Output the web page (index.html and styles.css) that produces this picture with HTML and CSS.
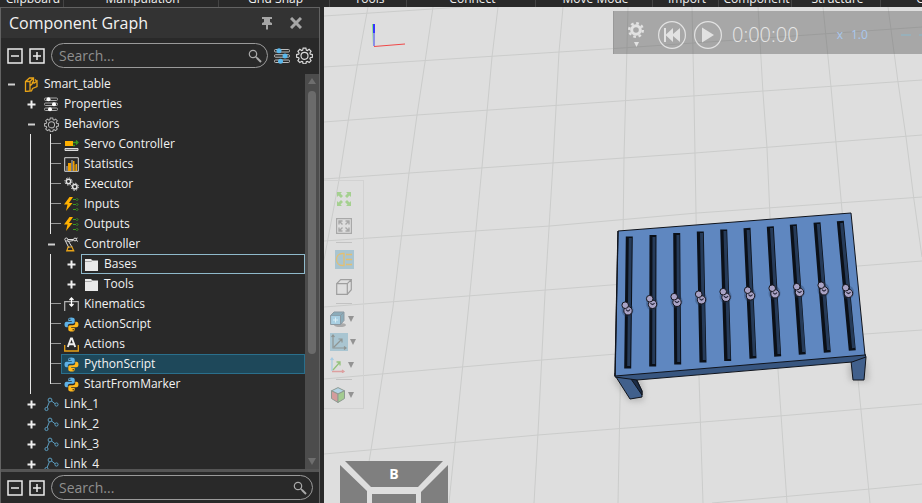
FILE: index.html
```html
<!DOCTYPE html>
<html lang="en">
<head>
<meta charset="utf-8">
<title>Component Graph</title>
<link rel="stylesheet" href="styles.css">
</head>
<body>
<svg class="defs" aria-hidden="true">
  <symbol id="minus" viewBox="0 0 9 9"><path d="M1 4.500h7" stroke="#d0d0d0" stroke-width="2"/></symbol>
  <symbol id="plus" viewBox="0 0 9 9"><path d="M.5 4.500h8M4.500 .5v8" stroke="#f0f0f0" stroke-width="2"/></symbol>
  <symbol id="boxminus" viewBox="0 0 16 16"><path d="M1 1h14v14H1z" fill="none" stroke="#ececec" stroke-width="1.500"/><path d="M4 8h8" stroke="#ececec" stroke-width="1.500"/></symbol>
  <symbol id="boxplus" viewBox="0 0 16 16"><path d="M1 1h14v14H1z" fill="none" stroke="#ececec" stroke-width="1.500"/><path d="M4 8h8M8 4v8" stroke="#ececec" stroke-width="1.500"/></symbol>
  <symbol id="lens" viewBox="0 0 14 14"><circle cx="5" cy="5" r="3.700" fill="none" stroke="#aaa" stroke-width="1.200"/><path d="M7.500 7.500l2 2" stroke="#aaa" stroke-width="1.200"/><path d="M9 9l4 4" stroke="#aaa" stroke-width="2"/></symbol>
  <symbol id="gear" viewBox="0 0 16 16"><path d="M6.700 1h2.600l.4 1.900 1 .4 1.700-1.100 1.800 1.800-1.100 1.700.4 1 1.900.4v2.600l-1.900.4-.4 1 1.100 1.700-1.800 1.800-1.700-1.100-1 .4-.4 1.900H6.700l-.4-1.900-1-.4-1.700 1.100-1.800-1.800 1.100-1.700-.4-1-1.900-.4V7.100l1.900-.4.4-1-1.100-1.700 1.800-1.800 1.700 1.100 1-.4z" fill="none" stroke="currentColor" stroke-width="1.100"/><circle cx="8" cy="8.300" r="3.300" fill="none" stroke="currentColor" stroke-width="1.100"/></symbol>
  <symbol id="part" viewBox="0 0 15 15"><path d="M1.500 4.500l4-3.500h4v3l-1 1.500 2 .5 2.500-2v5.500l-4.500 2-1 2.500-6 .5zM1.500 4.500h4.500l3.500-3.500M6 4.500v9M6 9l3-3M11 2.500l1.500 1.500" fill="none" stroke="#e8a317" stroke-width="1.300"/></symbol>
  <symbol id="props" viewBox="0 0 15 15"><g fill="none" stroke="#aaa"><rect x=".5" y="1" width="13" height="2.500" rx="1"/><rect x=".5" y="6" width="13" height="2.500" rx="1"/><rect x=".5" y="11" width="13" height="2.500" rx="1"/></g><g fill="#fff"><circle cx="4.500" cy="2.300" r="2"/><circle cx="10" cy="7.300" r="2"/><circle cx="6" cy="12.300" r="2"/></g></symbol>
  <symbol id="filter" viewBox="0 0 16 16"><g fill="none" stroke="#bdbdbd"><rect x=".5" y="1.500" width="15" height="2.500" rx="1"/><rect x=".5" y="6.700" width="15" height="2.500" rx="1"/><rect x=".5" y="12" width="15" height="2.500" rx="1"/></g><g fill="#5ab8ec"><circle cx="5" cy="2.800" r="2.500"/><circle cx="11" cy="8" r="2.500"/><circle cx="6.500" cy="13.200" r="2.500"/></g></symbol>
  <symbol id="servo" viewBox="0 0 15 15"><path d="M1 4h8v5H1z" fill="#ffb000"/><path d="M9 5.500h4M12 3.500l2 2-2 2M9 8.500h2" fill="none" stroke="#3a9b23" stroke-width="1.300"/><path d="M1 11.500h13v2H1z" fill="#777" stroke="#ddd"/></symbol>
  <symbol id="stats" viewBox="0 0 15 15"><path d="M.7.7h13.600v13.600H.7z" fill="none" stroke="#d8d8d8"/><path d="M2 9h2v5H2zM7 3h2v11H7zM10.500 8h1v6h-1z" fill="#777"/><path d="M4 6h3v8H4zM9 4h1.500v10H9zM11.500 7H13v7h-1.500z" fill="#f0a000"/></symbol>
  <symbol id="exec" viewBox="0 0 15 15"><g fill="none" stroke="#e2e2e2"><circle cx="4.500" cy="4.500" r="2.200" stroke-width="1.500"/><circle cx="4.500" cy="4.500" r="3.600" stroke-dasharray="1.400 1.420"/><circle cx="10.800" cy="9.800" r="2.200" stroke-width="1.500"/><circle cx="10.800" cy="9.800" r="3.600" stroke-dasharray="1.400 1.420"/></g></symbol>
  <symbol id="signal" viewBox="0 0 15 15"><path d="M5.500 0L0 7.500h3.500L2 14l6.500-8H5L9 0z" fill="#ffb000"/><path d="M9 2.500h3M9 7.500h3M9 12.500h3M12.500 1l1.500 1.500L12.500 4M12.500 6L14 7.500 12.500 9M12.500 11l1.500 1.500-1.500 1.500" fill="none" stroke="#3a9b23"/></symbol>
  <symbol id="robot" viewBox="0 0 15 15"><path d="M2 2.500h10M3.500 4.500l6-1M1.500 4l3.500 7M4 3.500L8 10M11 2l2.500-1M12 3l2 1.500" fill="none" stroke="#ddd"/><circle cx="2.300" cy="2.500" r="1.500" fill="#292929" stroke="#ddd"/><circle cx="11" cy="2.500" r="1.400" fill="#292929" stroke="#ddd"/><path d="M3 13.500l1-3.500h4l1.500 3.500zM2 14h8.500" fill="none" stroke="#e8a317" stroke-width="1.200"/></symbol>
  <symbol id="folder" viewBox="0 0 15 15"><path d="M1 2h6l1.500 1.500H14V14H1z" fill="#e9e9e9"/><path d="M1 4.500h6L8.500 3.500" fill="none" stroke="#aaa"/></symbol>
  <symbol id="kin" viewBox="0 0 15 15"><path d="M.7 14V4.700h13.600V14" fill="none" stroke="#b5b5b5" stroke-width="1.200"/><path d="M7.500 1v9M5.500 3l2-2 2 2M5.500 7l2 2 2-2" fill="none" stroke="#fff" stroke-width="1.300"/></symbol>
  <symbol id="python" viewBox="0 0 15 15"><path d="M7.200.5C5 .5 4.300 1.400 4.300 2.600V4h3.500v.8H2.500C1.200 4.800.5 6 .5 7.500s.7 2.800 2 2.800h1.300V8.700c0-1.200 1-2 2.200-2h3c1 0 1.700-.8 1.700-1.700V2.600C10.700 1.200 9.500.5 7.200.5z" fill="#5fb2e6"/><path d="M7.800 14.500c2.200 0 2.900-.9 2.900-2.100V11H7.200v-.8h5.300c1.300 0 2-1.200 2-2.700s-.7-2.800-2-2.800h-1.300v1.600c0 1.200-1 2-2.200 2H6c-1 0-1.700.8-1.700 1.700v2.400c0 1.400 1.200 2.100 3.500 2.100z" fill="#ffb81c"/><circle cx="5.800" cy="2.300" r=".7" fill="#222"/><circle cx="9.200" cy="12.700" r=".7" fill="#222"/></symbol>
  <symbol id="action" viewBox="0 0 15 15"><path d="M.7 8v6h13.600V8" fill="none" stroke="#e8a317" stroke-width="1.300"/><path d="M3.800 10L7 1.500h1L11.200 10M5 7.300h5" fill="none" stroke="#eee" stroke-width="1.900"/></symbol>
  <symbol id="link" viewBox="0 0 15 15"><path d="M2.500 12L6 3.300M7 3.500l5 4" fill="none" stroke="#5c9cbe"/><g fill="#292929" stroke="#5c9cbe"><circle cx="2.500" cy="12" r="1.600"/><circle cx="6" cy="3" r="1.900"/><circle cx="12.500" cy="7.500" r="1.600"/></g></symbol>
  <symbol id="caret" viewBox="0 0 6 6"><path d="M0 0h6L3 6z" fill="#939393"/></symbol>
</svg>

<div class="app">
  <nav class="ribbon" aria-label="Ribbon groups">
    <span>Clipboard</span><span>Manipulation</span><span>Grid Snap</span><span>Tools</span><span>Connect</span><span>Move Mode</span><span>Import</span><span>Component</span><span>Structure</span><span>Geometry</span>
  </nav>

  <div class="work">
    <aside class="panel">
      <header class="panel-head">
        <h1>Component Graph</h1>
        <button type="button" aria-label="Pin"><svg width="12" height="14" viewBox="0 0 12 14"><path d="M1 1h10v2H9v3l2 1v2H7v4.500H5V9H1V7l2-1V3H1z" fill="#a6a6a6"/></svg></button>
        <button type="button" aria-label="Close"><svg width="12" height="12" viewBox="0 0 12 12"><path d="M1 1l10 10M11 1L1 11" stroke="#a6a6a6" stroke-width="3"/></svg></button>
      </header>

      <div class="tools">
        <button type="button" aria-label="Collapse all"><svg width="16" height="16"><use href="#boxminus"/></svg></button>
        <button type="button" aria-label="Expand all"><svg width="16" height="16"><use href="#boxplus"/></svg></button>
        <label class="search"><input type="text" placeholder="Search..." aria-label="Search components"><svg width="14" height="14"><use href="#lens"/></svg></label>
        <button type="button" aria-label="Filter"><svg width="16" height="16"><use href="#filter"/></svg></button>
        <button type="button" aria-label="Settings"><svg width="17" height="17"><use href="#gear"/></svg></button>
      </div>

      <div class="tree-wrap">
        <ul class="tree">
          <li><button class="tg" type="button" aria-label="Collapse"><svg><use href="#minus"/></svg></button><span class="item"><svg><use href="#part"/></svg>Smart_table</span></li>
          <li><i></i><button class="tg" type="button" aria-label="Expand"><svg><use href="#plus"/></svg></button><span class="item"><svg><use href="#props"/></svg>Properties</span></li>
          <li><i></i><button class="tg" type="button" aria-label="Collapse"><svg><use href="#minus"/></svg></button><span class="item dim"><svg><use href="#gear"/></svg>Behaviors</span></li>
          <li><i></i><i class="v"></i><i class="v tick"></i><span class="item"><svg><use href="#servo"/></svg>Servo Controller</span></li>
          <li><i></i><i class="v"></i><i class="v tick"></i><span class="item"><svg><use href="#stats"/></svg>Statistics</span></li>
          <li><i></i><i class="v"></i><i class="v tick"></i><span class="item"><svg><use href="#exec"/></svg>Executor</span></li>
          <li><i></i><i class="v"></i><i class="v tick"></i><span class="item"><svg><use href="#signal"/></svg>Inputs</span></li>
          <li><i></i><i class="v"></i><i class="v tick"></i><span class="item"><svg><use href="#signal"/></svg>Outputs</span></li>
          <li><i></i><i class="v"></i><button class="tg" type="button" aria-label="Collapse"><svg><use href="#minus"/></svg></button><span class="item"><svg><use href="#robot"/></svg>Controller</span></li>
          <li><i></i><i class="v"></i><i class="v"></i><button class="tg" type="button" aria-label="Expand"><svg><use href="#plus"/></svg></button><span class="item hover"><svg><use href="#folder"/></svg>Bases</span></li>
          <li><i></i><i class="v"></i><i class="v"></i><button class="tg" type="button" aria-label="Expand"><svg><use href="#plus"/></svg></button><span class="item"><svg><use href="#folder"/></svg>Tools</span></li>
          <li><i></i><i class="v"></i><i class="v tick"></i><span class="item"><svg><use href="#kin"/></svg>Kinematics</span></li>
          <li><i></i><i class="v"></i><i class="v tick"></i><span class="item"><svg><use href="#python"/></svg>ActionScript</span></li>
          <li><i></i><i class="v"></i><i class="v tick"></i><span class="item"><svg><use href="#action"/></svg>Actions</span></li>
          <li><i></i><i class="v"></i><i class="v tick"></i><span class="item selected"><svg><use href="#python"/></svg>PythonScript</span></li>
          <li><i></i><i class="v"></i><i class="v tick last"></i><span class="item"><svg><use href="#python"/></svg>StartFromMarker</span></li>
          <li><i></i><button class="tg" type="button" aria-label="Expand"><svg><use href="#plus"/></svg></button><span class="item"><svg><use href="#link"/></svg>Link_1</span></li>
          <li><i></i><button class="tg" type="button" aria-label="Expand"><svg><use href="#plus"/></svg></button><span class="item"><svg><use href="#link"/></svg>Link_2</span></li>
          <li><i></i><button class="tg" type="button" aria-label="Expand"><svg><use href="#plus"/></svg></button><span class="item"><svg><use href="#link"/></svg>Link_3</span></li>
          <li><i></i><button class="tg" type="button" aria-label="Expand"><svg><use href="#plus"/></svg></button><span class="item"><svg><use href="#link"/></svg>Link_4</span></li>
        </ul>
        <div class="scrollbar"><b class="up"></b><b class="thumb"></b><b class="down"></b></div>
      </div>

      <div class="tools bottom">
        <button type="button" aria-label="Collapse all"><svg width="16" height="16"><use href="#boxminus"/></svg></button>
        <button type="button" aria-label="Expand all"><svg width="16" height="16"><use href="#boxplus"/></svg></button>
        <label class="search"><input type="text" placeholder="Search..." aria-label="Search nodes"><svg width="14" height="14"><use href="#lens"/></svg></label>
      </div>
    </aside>

    <main class="view">
      <svg class="scene" viewBox="324 7 598 496" preserveAspectRatio="xMinYMin slice" aria-label="3D view of the table">
        <defs>
          <filter id="soft" x="-30%" y="-30%" width="160%" height="160%"><feGaussianBlur stdDeviation="3"/></filter>
          <g id="ball"><ellipse cx="1" cy="2" rx="6" ry="7" fill="#20334f" opacity=".3"/><circle cx="1.500" cy="2.800" r="4.200" fill="#a9a3c6" stroke="#15151d"/><path d="M-.5 1.500q2 3 4 0" fill="none" stroke="#26263a" stroke-width="1.300"/><circle cx="-1.300" cy="-2.800" r="3.300" fill="#a9a3c6" stroke="#15151d"/></g>
        </defs>
        <g fill="none" stroke="#cbcccb">
          <path d="M368 7L357 67 348 122 339 180 324 260M433 7L425 62 417 115 409 173 393 307 371 450 362 503M498 7L492 57 482 167 469 303 455 443 449 503M563 7L559 52 553 163 545 293 538 433 534 503M628 7L627 47 624 157 623 240 620 400 618 503M692 7L694 97 696 213 699 377 703 503M758 7L763 93 767 148 770 217 778 370 787 503M823 7L831 87 836 143 842 210 860 400 870 503M888 7L898 82 906 137 914 200 922 257"/>
          <path d="M324 16L463 7M324 67L622 48 922 27M324 122L417 115 620 101 922 80M324 179L552 163 695 153 922 135M324 241L550 226 697 213 922 197M324 307L546 290 858 266 922 261M324 379L542 360 865 334 922 330M324 454L538 435 779 416 922 404M712 503L870 489 922 484"/>
        </g>
        <g filter="url(#soft)" fill="#7b7b7b" opacity=".4"><path d="M612 377l17 24h15l-2-22zM848 364l2 17h19l-2-22z"/></g>
        <g stroke="#10141c" stroke-linejoin="round">
          <path d="M616 377l14 22 12-2v-6l-6-13z" fill="#41608c"/>
          <path d="M631 379l11 16v-4l-6-12z" fill="#1c2c46"/>
          <path d="M851 361l2 19h11l2-23-3-2z" fill="#41608c"/>
          <path d="M615 373v4l22 3 215-18 14-5-1-3z" fill="#385680"/>
          <path d="M618 231l233-18 14 142-250 21z" fill="#5f87c0"/>
        </g>
        <path d="M618 231l-3 145" stroke="#10141c" stroke-width="1.300"/>
        <g stroke="#0b1018" stroke-width="7">
          <path d="M629.300 236.500L627.700 368.500M653 235L652.700 366.500M676.700 233L677.700 364.500M700.300 231.500L703 362.500M723.700 229.500L727.700 361M747 228L753 358.500M770.300 226.500L777.700 356.500M793.300 224.500L802.300 354.500M817 222.500L827.300 352.500M840.300 221L852.300 350.500"/>
        </g>
        <g stroke="#263b59" stroke-width="3">
          <path d="M630.300 238L628.700 366M654 237L653.700 364M678 235L678.700 362M701.500 233L704.300 360M725 231L729 359M748.200 230L754.300 356M771.500 228L779 354M794.600 226L803.700 352M818.300 224L828.600 350M841.600 223L853.600 348"/>
        </g>
        <use href="#ball" x="626.500" y="308"/><use href="#ball" x="651" y="301.500"/><use href="#ball" x="675.500" y="299.500"/><use href="#ball" x="700" y="297"/><use href="#ball" x="724.500" y="294.500"/><use href="#ball" x="749" y="293"/><use href="#ball" x="773.500" y="291"/><use href="#ball" x="798" y="289.500"/><use href="#ball" x="822.500" y="288"/><use href="#ball" x="847" y="290.500"/>
        <path d="M372.500 24l1 22" stroke="#7be27b"/>
        <path d="M374 24v9" stroke="#3535ff" stroke-width="2"/><path d="M374 33v13" stroke="#8a90e6" stroke-width="2"/>
        <path d="M374 46.500l31-2.500" stroke="#f04848"/>
      </svg>

      <div class="playbar">
        <button type="button" class="setup" aria-label="Simulation settings"><svg width="16" height="16" viewBox="0 0 16 16"><g fill="none" stroke="#e2e2e2"><circle cx="8" cy="8" r="4.300" stroke-width="3"/><circle cx="8" cy="8" r="6.800" stroke-width="2.400" stroke-dasharray="2.700 2.640"/></g></svg><svg width="5" height="5" viewBox="0 0 5 5"><path d="M0 0h5L2.500 5z" fill="#e2e2e2"/></svg></button>
        <button type="button" aria-label="Reset"><svg width="28" height="28" viewBox="0 0 28 28"><circle cx="14" cy="14" r="13.400" fill="none" stroke="#e2e2e2" stroke-width="1.200"/><path d="M6 7h2v6.500L15 7v6l7-6v14l-7-6v6l-7-6.500V21H6z" fill="#e2e2e2"/></svg></button>
        <button type="button" aria-label="Play"><svg width="28" height="28" viewBox="0 0 28 28"><circle cx="14" cy="14" r="13.400" fill="none" stroke="#e2e2e2" stroke-width="1.200"/><path d="M8 6.500v15L20 14z" fill="#e2e2e2"/></svg></button>
        <output class="time">0:00:00</output>
        <span class="speed"><span>x</span><span>1.0</span></span>
        <span class="track"></span>
      </div>

      <div class="viewtools">
        <button type="button" aria-label="Fill"><svg width="16" height="16" viewBox="0 0 16 16"><path d="M1 6V1h5L4.500 2.500 7 5 5 7 2.500 4.500zM10 1h5v5l-1.500-1.500L11 7 9 5l2.500-2.500zM1 10l1.500 1.500L5 9l2 2-2.500 2.500L6 15H1zM15 10v5h-5l1.500-1.500L9 11l2-2 2.500 2.500z" fill="#a5d090"/></svg></button>
        <button type="button" aria-label="Fill selected"><svg width="16" height="16" viewBox="0 0 16 16"><path d="M.6.6h14.800v14.800H.6z" fill="none" stroke="#a8a8a8" stroke-width="1.200"/><path d="M3 6.500V3h3.500M3.500 3.500L6.500 6.500M9.500 3H13v3.500M12.500 3.500l-3 3M3 9.500V13h3.500M3.500 12.500l3-3M13 9.500V13H9.500M12.500 12.500l-3-3" fill="none" stroke="#a8a8a8" stroke-width="1.400"/></svg></button>
        <hr>
        <button type="button" class="on" aria-label="Headlight"><svg width="19" height="19" viewBox="0 0 19 19"><path d="M9 3.500v12H7.500C4 15.500 1.500 13 1.500 9.500s2.500-6 6-6zM11 4.500h6M11 9.500h6M11 14.500h6" fill="none" stroke="#e3bf72" stroke-width="1.300"/></svg></button>
        <button type="button" aria-label="Orthographic"><svg width="16" height="16" viewBox="0 0 16 16"><path d="M.7 4.700h10.600v10.600H.7zM.7 4.700l4-4h10.600l-4 4M15.300.7v10l-4 4.600" fill="none" stroke="#9e9e9e" stroke-width="1.200"/></svg></button>
        <hr>
        <button type="button" class="menu" aria-label="Render mode"><svg width="16" height="16" viewBox="0 0 16 16"><ellipse cx="10" cy="14" rx="6" ry="2" fill="#aaa"/><path d="M.6 4.500h9.900v9H.6z" fill="#a8cfe2" stroke="#8b99a2"/><path d="M.6 4.500L4 1h10l-3.500 3.500M14 1v8.500l-3.500 4v-9z" fill="#8bacba" stroke="#8b99a2"/><path d="M3 9h5M5.500 6.500v5" stroke="#d8edf5"/></svg><svg class="caret"><use href="#caret"/></svg></button>
        <button type="button" class="menu on" aria-label="Frame types"><svg width="18" height="18" viewBox="0 0 18 18"><path d="M3 2v13h13M1.500 4L3 2l1.500 2M14 13.500l2 1.500-2 1.500M4 14l8-8M8.500 6H12v3.500" fill="none" stroke="#8f9593" stroke-width="1.200"/></svg><svg class="caret"><use href="#caret"/></svg></button>
        <button type="button" class="menu" aria-label="Origin frame"><svg width="16" height="16" viewBox="0 0 16 16"><path d="M2 14V1M.5 3L2 1l1.500 2" fill="none" stroke="#a5cbe2" stroke-width="1.200"/><path d="M3 13l7-8M6.500 5H10v3.500" fill="none" stroke="#94c27c" stroke-width="1.300"/><path d="M2 14.500h12M12 13l2 1.500-2 1.300" fill="none" stroke="#dda0a0" stroke-width="1.300"/></svg><svg class="caret"><use href="#caret"/></svg></button>
        <hr>
        <button type="button" class="menu" aria-label="Color mode"><svg width="16" height="16" viewBox="0 0 16 16"><g stroke="#8e9a92"><path d="M8 .6l6.500 3.200L8 7 1.500 3.800z" fill="#b3d3e4"/><path d="M1.500 3.800L8 7v8.500l-6.500-4z" fill="#d39c9c"/><path d="M14.500 3.800L8 7v8.500l6.500-4z" fill="#a2cb90"/></g></svg><svg class="caret"><use href="#caret"/></svg></button>
      </div>

      <div class="cube">
        <svg width="108" height="42" viewBox="0 0 108 42" aria-hidden="true"><path d="M0 0h108v42H0z" fill="#dedede"/><path d="M5 0h98L78 26H31zM0 4l27 26v12H0zM108 4L81 31v11h27zM32 33h44v9H32z" fill="#7f7f7f"/></svg>
        <span>B</span>
      </div>
    </main>
  </div>
</div>
</body>
</html>
```
FILE: styles.css
```css
* { box-sizing: border-box; }
body { margin: 0; background: #292929; color: #f2f2f2; font: 12px/20px "Open Sans", "Noto Sans", sans-serif; }
button { display: flex; align-items: center; justify-content: center; padding: 0; border: 0; background: none; color: #dcdcdc; }
svg { display: block; flex: none; }
.defs { position: absolute; width: 0; height: 0; }
.app { display: flex; flex-direction: column; height: 100vh; overflow: hidden; }

.ribbon { display: grid; flex: none; grid-template-columns: 64px 155px 111px 77px 129px 117px 66px 73px 89px 124px; grid-template-rows: 7px; align-items: end; height: 7px; overflow: hidden; line-height: 16px; text-align: center; white-space: nowrap; }
.ribbon span { padding-left: 3px; border-right: 1px solid #444; }

.work { display: flex; flex: 1; min-height: 0; }
.panel { display: flex; flex-direction: column; flex: none; width: 320px; margin-right: 4px; border: solid #636363; border-width: 1px 1px 0; }
.panel-head { display: flex; align-items: center; gap: 17px; flex: none; height: 30px; padding: 0 17px 0 8px; background: #333; }
.panel-head h1 { flex: 1; margin: 0; font-size: 16px; font-weight: 400; line-height: 30px; }
.tools { display: flex; align-items: center; gap: 6px; flex: none; height: 36px; padding: 0 6px 1px; }
.search { display: flex; align-items: center; flex: 1; min-width: 0; height: 25px; padding: 0 5px 0 7px; border: 1px solid #9a9a9a; border-radius: 13px; }
.search input { flex: 1; min-width: 0; padding: 0; border: 0; outline: 0; background: none; color: #eee; font: 14px/20px "Open Sans", "Noto Sans", sans-serif; }
.search input::placeholder { color: #8f8f8f; opacity: 1; }
.bottom { height: 34px; padding-bottom: 0; border-top: 3px solid #555; }

.tree-wrap { display: flex; flex: 1; min-height: 0; overflow: hidden; }
.tree { flex: 1; margin: 0; padding: 0; list-style: none; }
.tree li { display: flex; height: 20px; }
.tree i, .tg { flex: none; width: 20px; height: 20px; }
.tg svg { width: 9px; height: 9px; }
.v { background: linear-gradient(#e6e6e6, #e6e6e6) 9px 0 / 1px 100% no-repeat; }
.tick { background: linear-gradient(#e6e6e6, #e6e6e6) 9px 0 / 1px 100% no-repeat, linear-gradient(#9a9a9a, #9a9a9a) 10px 9px / 10px 1px no-repeat; }
.last { background-size: 1px 10px, 10px 1px; }
.item { display: flex; flex: 1; align-items: center; gap: 5px; padding-left: 2px; border: 1px solid transparent; white-space: nowrap; }
.item svg { width: 15px; height: 15px; color: #b5b5b5; }
.hover { border-color: #8fb9cb; }
.selected { background: #1e485a; border-color: #2a6f8c; }

.scrollbar { display: flex; flex-direction: column; align-items: center; width: 14px; padding: 4px 0; background: #4c4c4c; }
.up, .down { border: 4px solid transparent; }
.up { border-top-width: 0; border-bottom: 6px solid #6e6e6e; }
.down { margin-top: auto; border-bottom-width: 0; border-top: 7px solid #6e6e6e; }
.thumb { width: 8px; height: 68%; margin-top: 7px; border-radius: 4px; background: #6b6b6b; }

.view { position: relative; flex: 1; min-width: 0; overflow: hidden; background: #dedede; }
.scene { width: 100%; height: 100%; }
.playbar { position: absolute; top: 4px; left: 289px; right: 0; display: flex; align-items: center; gap: 8px; height: 43px; padding: 4px 0 0 14px; overflow: hidden; border-left: 1px solid #999; background: rgba(90, 90, 90, .42); }
.setup { flex-direction: column; gap: 4px; width: 16px; margin-right: 6px; }
.time { margin-left: 2px; color: #e6e6e6; font: 300 20px/28px "Open Sans", "Noto Sans", sans-serif; }
.speed { display: flex; gap: 8px; margin-left: 30px; color: #a9c8ee; }
.track { flex: 1; height: 2px; margin-left: 25px; background: repeating-linear-gradient(90deg, #98b0ba 0 10px, transparent 10px 18px); }

.viewtools { position: absolute; top: 173px; left: 0; width: 40px; padding: 4px 0 2px; border: 1px solid #d2d2d2; border-left: 0; }
.viewtools button { width: 40px; height: 27px; }
.viewtools hr { width: 16px; height: 1px; margin: 3px 0 3px 12px; border: 0; background: #c2c2c2; }
.viewtools .menu { justify-content: flex-start; gap: 2px; height: 23px; padding-left: 6px; }
.viewtools .on svg:first-child { background: #a9c5d1; }
.viewtools .caret { width: 6px; height: 6px; }

.cube { position: absolute; bottom: 0; left: 16px; width: 108px; }
.cube span { position: absolute; top: 3px; left: 0; width: 100%; color: #fff; font-size: 14px; font-weight: 700; text-align: center; }
```
